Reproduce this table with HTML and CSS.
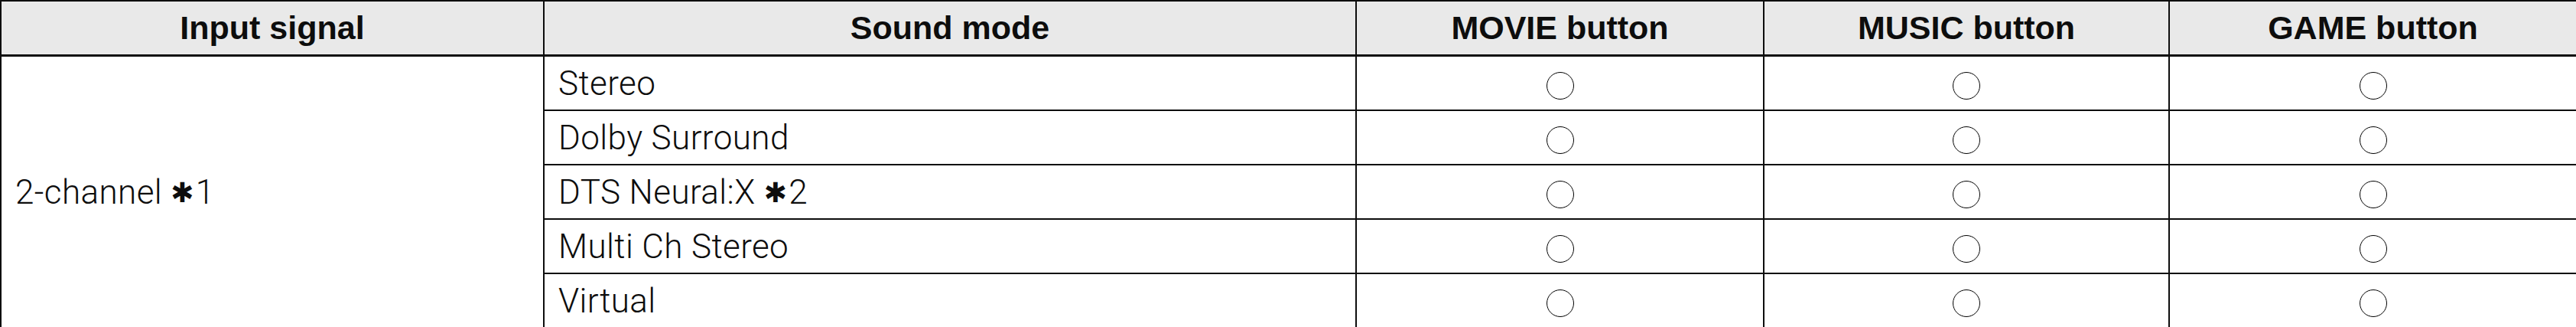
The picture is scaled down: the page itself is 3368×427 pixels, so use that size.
FILE: index.html
```html
<!DOCTYPE html>
<html lang="en">
<head>
<meta charset="utf-8">
<title>Sound modes</title>
<link rel="stylesheet" href="styles.css">
</head>
<body>
<table class="modes">
  <colgroup>
    <col class="c-input">
    <col class="c-mode">
    <col class="c-btn1">
    <col class="c-btn2">
    <col class="c-btn3">
  </colgroup>
  <thead>
    <tr>
      <th>Input signal</th>
      <th>Sound mode</th>
      <th>MOVIE button</th>
      <th>MUSIC button</th>
      <th>GAME button</th>
    </tr>
  </thead>
  <tbody>
    <tr>
      <td class="label input" rowspan="5">2-channel <span class="ast">✱</span>1</td>
      <td class="label mode">Stereo</td>
      <td class="mark"><span class="circle"></span></td>
      <td class="mark"><span class="circle"></span></td>
      <td class="mark"><span class="circle"></span></td>
    </tr>
    <tr>
      <td class="label mode">Dolby Surround</td>
      <td class="mark"><span class="circle"></span></td>
      <td class="mark"><span class="circle"></span></td>
      <td class="mark"><span class="circle"></span></td>
    </tr>
    <tr>
      <td class="label mode">DTS Neural:X <span class="ast">✱</span>2</td>
      <td class="mark"><span class="circle"></span></td>
      <td class="mark"><span class="circle"></span></td>
      <td class="mark"><span class="circle"></span></td>
    </tr>
    <tr>
      <td class="label mode">Multi Ch Stereo</td>
      <td class="mark"><span class="circle"></span></td>
      <td class="mark"><span class="circle"></span></td>
      <td class="mark"><span class="circle"></span></td>
    </tr>
    <tr>
      <td class="label mode">Virtual</td>
      <td class="mark"><span class="circle"></span></td>
      <td class="mark"><span class="circle"></span></td>
      <td class="mark"><span class="circle"></span></td>
    </tr>
  </tbody>
</table>
</body>
</html>
```
FILE: styles.css
```css
html, body {
  margin: 0;
  padding: 0;
  background: #ffffff;
}

.modes {
  border-collapse: collapse;
  table-layout: fixed;
  width: 3368px;
  border: 2px solid #0d0d0d;
  color: #0d0d0d;
  font-family: "Roboto", "Liberation Sans", sans-serif;
}

.c-input { width: 710px; }
.c-mode  { width: 1062px; }
.c-btn1  { width: 533px; }
.c-btn2  { width: 530px; }
.c-btn3  { width: 533px; }

.modes th,
.modes td {
  border: 2px solid #0d0d0d;
  padding: 0;
  height: 69px;
  vertical-align: middle;
}

.modes th {
  background: #e9e9e9;
  border-bottom-width: 3px;
  font-family: "Liberation Sans", Arial, sans-serif;
  font-weight: 700;
  font-size: 43px;
  text-align: center;
}

.modes td {
  font-weight: 300;
  font-size: 44px;
  letter-spacing: 0.4px;
}

.modes .label {
  padding-left: 18px;
  text-align: left;
}

.ast {
  font-family: "DejaVu Sans", sans-serif;
  font-weight: 400;
  font-size: 36px;
  position: relative;
  top: -2px;
  margin-right: 2px;
}

.modes .mark {
  text-align: center;
}

.circle {
  display: inline-block;
  width: 34px;
  height: 34px;
  border: 1.6px solid #000000;
  border-radius: 50%;
  vertical-align: middle;
}
```
